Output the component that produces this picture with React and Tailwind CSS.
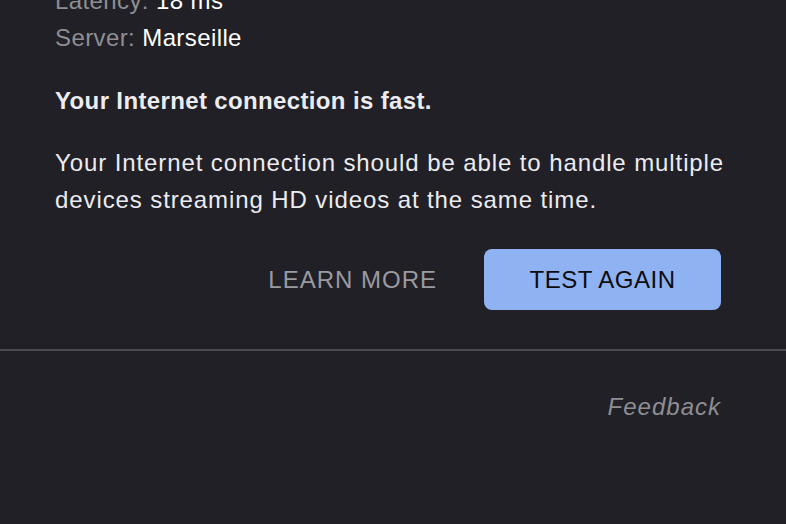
export default function App() {
  return (
    <main
      className="w-[786px] h-[524px] overflow-hidden bg-[#202026] text-white"
      style={{ fontFamily: '"Liberation Sans", Arial, sans-serif' }}
    >
      <section className="pl-[55px] pr-[65px]">
        <div className="-mt-[18px] text-[24px] leading-[37px] tracking-[0.4px]">
          <p>
            <span className="text-[#8e8e93]">Latency: </span>
            <span>18 ms</span>
          </p>
          <p>
            <span className="text-[#8e8e93]">Server: </span>
            <span>Marseille</span>
          </p>
        </div>

        <p className="mt-[26px] text-[24px] leading-[37px] font-semibold tracking-[0.36px] text-[#ececf0]">
          Your Internet connection is fast.
        </p>

        <p className="mt-[25px] -mr-[20px] text-[24px] leading-[37px] tracking-[0.9px] text-[#ececf0]">
          Your Internet connection should be able to handle multiple devices
          streaming HD videos at the same time.
        </p>

        <div className="mt-[31px] flex items-center justify-end gap-[47px]">
          <button className="text-[24px] tracking-[1px] text-[#9a9aa0] uppercase">
            Learn More
          </button>
          <button className="w-[237px] h-[61px] rounded-[8px] bg-[#8fb2f2] text-[24px] tracking-[0.5px] text-[#0c0c10] uppercase">
            Test Again
          </button>
        </div>
      </section>

      <div className="mt-[39px] h-[2px] bg-[#4a4a50]"></div>

      <div className="pr-[65px] mt-[37px] flex justify-end">
        <a className="text-[24px] leading-[37px] italic tracking-[1px] text-[#8e8e93]">
          Feedback
        </a>
      </div>
    </main>
  );
}
